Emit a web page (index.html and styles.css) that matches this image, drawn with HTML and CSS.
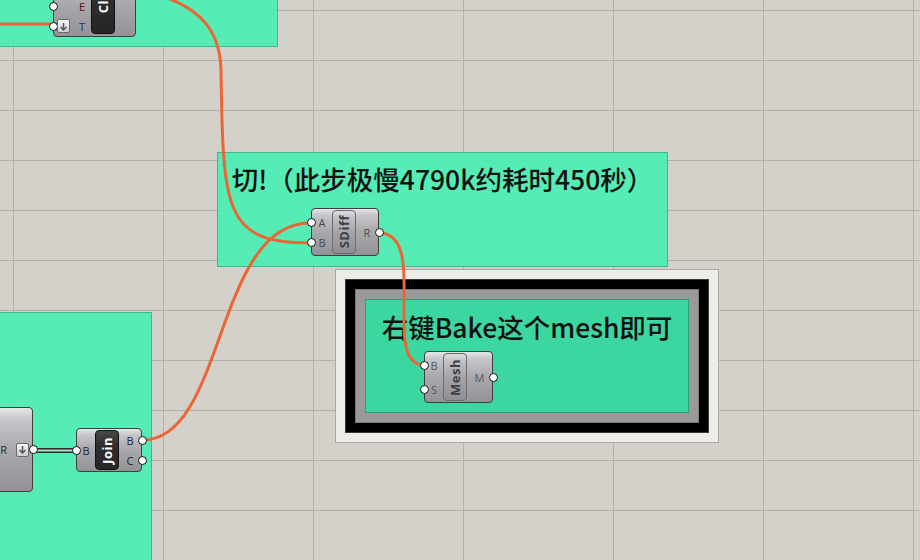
FILE: index.html
```html
<!DOCTYPE html>
<html>
<head>
<meta charset="utf-8">
<link rel="stylesheet" href="styles.css">
</head>
<body>
<div class="canvas">
  <div class="group g-top"></div>
  <div class="group g-mid"><div class="note">切!（此步极慢4790k约耗时450秒）</div></div>
  <div class="group g-left"></div>
  <div class="frame">
    <div class="frame-black">
      <div class="frame-grey">
        <div class="frame-green"><div class="note">右键Bake这个mesh即可</div></div>
      </div>
    </div>
  </div>

  <svg class="wires" width="920" height="560" viewBox="0 0 920 560">
    <path class="wire" d="M-5,24 L52,24"/>
    <path class="wire" d="M165,-3 C200,10 220,30 221,70 C223,210 224,243 310,243"/>
    <path class="wire" d="M143,440 C225,440 215,223 310,223"/>
    <path class="wire" d="M379,233 C430,233 380,365 424,365"/>
    <path class="list-outer" d="M33,450.5 L76,450.5"/>
    <path class="list-inner" d="M33,450.5 L76,450.5"/>
  </svg>

  <!-- top-left component (partially off-canvas) -->
  <div class="comp c-tl">
    <div class="ins">
      <div class="port lbl-e"><span class="grip"></span>E</div>
      <div class="port lbl-t"><span class="grip"></span><span class="btn"><svg width="9" height="9" viewBox="0 0 9 9"><path d="M4.5 1 V8 M1.5 5 L4.5 8 L7.5 5"/></svg></span>T</div>
    </div>
    <div class="nick dark nick-tl"><span>Cl</span></div>
    <div class="outs"></div>
  </div>

  <!-- SDiff -->
  <div class="comp c-sdiff">
    <div class="ins">
      <div class="port"><span class="grip"></span>A</div>
      <div class="port"><span class="grip"></span>B</div>
    </div>
    <div class="nick light"><span>SDiff</span></div>
    <div class="outs">
      <div class="port">R<span class="grip"></span></div>
    </div>
  </div>

  <!-- Mesh -->
  <div class="comp c-mesh">
    <div class="ins">
      <div class="port"><span class="grip"></span>B</div>
      <div class="port"><span class="grip"></span>S</div>
    </div>
    <div class="nick light"><span>Mesh</span></div>
    <div class="outs">
      <div class="port">M<span class="grip"></span></div>
    </div>
  </div>

  <!-- left partial component -->
  <div class="comp c-left">
    <div class="outs">
      <div class="port">R<span class="btn"><svg width="9" height="9" viewBox="0 0 9 9"><path d="M4.5 1 V8 M1.5 5 L4.5 8 L7.5 5"/></svg></span><span class="grip"></span></div>
    </div>
  </div>

  <!-- Join -->
  <div class="comp c-join">
    <div class="ins">
      <div class="port"><span class="grip"></span>B</div>
    </div>
    <div class="nick dark"><span>Join</span></div>
    <div class="outs">
      <div class="port">B<span class="grip"></span></div>
      <div class="port">C<span class="grip"></span></div>
    </div>
  </div>
</div>
</body>
</html>
```

FILE: styles.css
```css
* { box-sizing: border-box; }

body {
  margin: 0;
  width: 920px;
  height: 560px;
  overflow: hidden;
}

.canvas {
  position: relative;
  width: 920px;
  height: 560px;
  overflow: hidden;
  background-color: #d4d0ca;
  background-image:
    linear-gradient(to right, #b3afa9 1px, transparent 1px),
    linear-gradient(to bottom, #b3afa9 1px, transparent 1px);
  background-size: 150px 50px;
  background-position: 13px 10px;
}

/* groups */
.group {
  position: absolute;
  background: rgba(72, 238, 178, 0.9);
  border: 1px solid rgba(50, 140, 105, 0.55);
}
.g-top { left: -1px; top: -1px; width: 279px; height: 48px; }
.g-mid { left: 217px; top: 152px; width: 451px; height: 115px; }
.g-left { left: -1px; top: 312px; width: 153px; height: 260px; }

.note {
  font-family: "Noto Sans CJK SC", "Noto Sans", sans-serif;
  font-size: 26.5px;
  font-weight: 500;
  line-height: 30px;
  color: #111;
  text-align: center;
  white-space: nowrap;
}
.g-mid .note { padding-top: 11px; }

/* nested frame groups */
.frame {
  position: absolute;
  left: 335px;
  top: 269px;
  width: 384px;
  height: 174px;
  padding: 9px;
  background: #eeece8;
  border: 1px solid #a9a7a3;
}
.frame-black {
  height: 100%;
  padding: 9px;
  background: #000;
  border: 1px solid #3a3a3a;
}
.frame-grey {
  height: 100%;
  padding: 9px;
  background: #9a9a9a;
  border: 1px solid #7a7a7a;
}
.frame-green {
  height: 100%;
  background: #3cd6a0;
  border: 1px solid #2b9f78;
}
.frame-green .note { padding-top: 12px; }

/* wires */
.wires {
  position: absolute;
  left: 0;
  top: 0;
}
.wire {
  fill: none;
  stroke: #ec6534;
  stroke-width: 3;
}
.list-outer { stroke: #2a2a2a; stroke-width: 5; fill: none; }
.list-inner { stroke: #a6e4c8; stroke-width: 2.2; fill: none; }

/* components */
.comp {
  position: absolute;
  display: flex;
  border: 1px solid #3e3e40;
  border-radius: 4px;
  background: linear-gradient(to bottom, #e6e6e8 0%, #c6c6ca 14%, #a9a9ad 50%, #929297 100%);
  font-family: "Open Sans", "DejaVu Sans", sans-serif;
  font-size: 11px;
  color: #4a4a4e;
}
.ins, .outs {
  display: flex;
  flex-direction: column;
  justify-content: center;
}
.port {
  position: relative;
  height: 20px;
  display: flex;
  align-items: center;
  justify-content: center;
}
.grip {
  position: absolute;
  top: 50%;
  width: 9px;
  height: 9px;
  margin-top: -4.5px;
  border-radius: 50%;
  background: #fff;
  border: 1.6px solid #111;
}
.ins .grip { left: -5.5px; }
.outs .grip { right: -5.5px; }

.nick {
  display: flex;
  align-items: center;
  justify-content: center;
  border-radius: 4px;
  margin: 1px 0;
  font-weight: 700;
  font-size: 13px;
}
.nick span {
  writing-mode: vertical-rl;
  transform: rotate(180deg);
  white-space: nowrap;
  letter-spacing: 0.5px;
}
.nick.light {
  border: 1px solid #6c6c70;
  background: linear-gradient(to bottom, #dcdcde 0%, #bdbdc1 20%, #a2a2a6 55%, #8f8f94 100%);
  color: #404044;
}
.nick.dark {
  border: 1px solid #111;
  background: linear-gradient(to bottom, #474747 0%, #2e2e2e 40%, #262626 100%);
  color: #fff;
}

.btn {
  display: flex;
  align-items: center;
  justify-content: center;
  width: 13px;
  height: 14px;
  border: 1px solid #6a6a6a;
  border-radius: 2px;
  background: linear-gradient(to bottom, #f6f6f6, #cfcfd2);
}
.btn path {
  fill: none;
  stroke: #555;
  stroke-width: 1.5;
}

/* top-left component */
.c-tl { left: 53px; top: -30px; width: 83px; height: 67px; }
.c-tl .ins { width: 37px; justify-content: flex-end; }
.c-tl .port { justify-content: flex-end; padding-right: 6px; }
.c-tl .lbl-e { color: #5a1010; }
.c-tl .lbl-t { color: #0c3a6a; }
.c-tl .lbl-t .btn { position: absolute; left: 3px; top: 3px; }
.c-tl .nick { width: 24px; margin: 2px 0; align-items: flex-end; padding-bottom: 20px; }
.c-tl .outs { flex: 1; }

/* SDiff */
.c-sdiff { left: 311px; top: 208px; width: 68px; height: 48px; }
.c-sdiff .ins { width: 20px; }
.c-sdiff .nick { width: 24px; }
.c-sdiff .outs { flex: 1; }

/* Mesh */
.c-mesh { left: 424px; top: 351px; width: 69px; height: 52px; color: #56565a; }
.c-mesh .port { height: 24px; }
.c-mesh .ins { width: 18px; }
.c-mesh .nick { width: 24px; }
.c-mesh .outs { flex: 1; }

/* left partial component */
.c-left { left: -20px; top: 407px; width: 53px; height: 85px; }
.c-left .outs { flex: 1; align-items: flex-end; }
.c-left .port { justify-content: flex-end; padding-right: 3px; color: #2a2a2e; }
.c-left .btn { margin-left: 9px; }

/* Join */
.c-join { left: 76px; top: 428px; width: 66px; height: 44px; color: #1e1e30; }
.c-join .ins { width: 18px; }
.c-join .nick { width: 24px; }
.c-join .outs { flex: 1; }
```
